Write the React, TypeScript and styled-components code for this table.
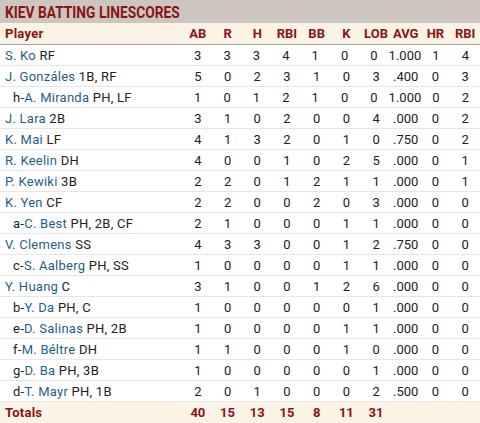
import styled, { createGlobalStyle } from "styled-components";

const GlobalStyle = createGlobalStyle`
  body {
    margin: 0;
    background: #fff;
    font-family: Roboto, "Liberation Sans", sans-serif;
  }
`;

const StyledBox = styled.section`
  width: 480px;
  font-family: Roboto, "Liberation Sans", sans-serif;
  font-size: 13px;
  color: #222;
`;

const TitleBar = styled.div`
  height: 23px;
  background: #cdc6c0;
  display: flex;
  align-items: center;
  padding-left: 5px;
  overflow: hidden;
`;

const Title = styled.h2`
  margin: 0;
  font-size: 17px;
  font-weight: 700;
  color: #8a1414;
  white-space: nowrap;
  transform: scaleX(0.81);
  transform-origin: left center;
`;

const Row = styled.div<{ $kind?: "head" | "total" }>`
  display: grid;
  grid-template-columns: 183px repeat(10, 1fr);
  align-items: center;
  height: ${(p) => (p.$kind === "total" ? "21px" : "20px")};
  background: ${(p) => (p.$kind ? "#fbf3e6" : "#fff")};
  border-bottom: ${(p) =>
    p.$kind === "total" ? "none" : p.$kind === "head" ? "1px solid #a9a39e" : "1px solid #e6e6e6"};
  color: ${(p) => (p.$kind ? "#8a1414" : "#222")};
  font-weight: ${(p) => (p.$kind ? 700 : 400)};
  ${(p) => p.$kind === "head" && "height: 21px;"}
`;

const PlayerCell = styled.div<{ $sub?: boolean }>`
  padding-left: ${(p) => (p.$sub ? "13px" : "5px")};
  white-space: nowrap;
  letter-spacing: 0.25px;
`;

const Name = styled.span`
  color: #1f5f86;
`;

const Stat = styled.div`
  text-align: center;
`;

type Batter = {
  sub?: string;
  name: string;
  pos: string;
  stats: string[];
};

const batters: Batter[] = [
  { name: "S. Ko", pos: "RF", stats: ["3", "3", "3", "4", "1", "0", "0", "1.000", "1", "4"] },
  { name: "J. Gonzáles", pos: "1B, RF", stats: ["5", "0", "2", "3", "1", "0", "3", ".400", "0", "3"] },
  { sub: "h", name: "A. Miranda", pos: "PH, LF", stats: ["1", "0", "1", "2", "1", "0", "0", "1.000", "0", "2"] },
  { name: "J. Lara", pos: "2B", stats: ["3", "1", "0", "2", "0", "0", "4", ".000", "0", "2"] },
  { name: "K. Mai", pos: "LF", stats: ["4", "1", "3", "2", "0", "1", "0", ".750", "0", "2"] },
  { name: "R. Keelin", pos: "DH", stats: ["4", "0", "0", "1", "0", "2", "5", ".000", "0", "1"] },
  { name: "P. Kewiki", pos: "3B", stats: ["2", "2", "0", "1", "2", "1", "1", ".000", "0", "1"] },
  { name: "K. Yen", pos: "CF", stats: ["2", "2", "0", "0", "2", "0", "3", ".000", "0", "0"] },
  { sub: "a", name: "C. Best", pos: "PH, 2B, CF", stats: ["2", "1", "0", "0", "0", "1", "1", ".000", "0", "0"] },
  { name: "V. Clemens", pos: "SS", stats: ["4", "3", "3", "0", "0", "1", "2", ".750", "0", "0"] },
  { sub: "c", name: "S. Aalberg", pos: "PH, SS", stats: ["1", "0", "0", "0", "0", "1", "1", ".000", "0", "0"] },
  { name: "Y. Huang", pos: "C", stats: ["3", "1", "0", "0", "1", "2", "6", ".000", "0", "0"] },
  { sub: "b", name: "Y. Da", pos: "PH, C", stats: ["1", "0", "0", "0", "0", "0", "1", ".000", "0", "0"] },
  { sub: "e", name: "D. Salinas", pos: "PH, 2B", stats: ["1", "0", "0", "0", "0", "1", "1", ".000", "0", "0"] },
  { sub: "f", name: "M. Béltre", pos: "DH", stats: ["1", "1", "0", "0", "0", "1", "0", ".000", "0", "0"] },
  { sub: "g", name: "D. Ba", pos: "PH, 3B", stats: ["1", "0", "0", "0", "0", "0", "1", ".000", "0", "0"] },
  { sub: "d", name: "T. Mayr", pos: "PH, 1B", stats: ["2", "0", "1", "0", "0", "0", "2", ".500", "0", "0"] },
];

const headers = ["AB", "R", "H", "RBI", "BB", "K", "LOB", "AVG", "HR", "RBI"];
const totals = ["40", "15", "13", "15", "8", "11", "31", "", "", ""];

export default function App() {
  return (
    <StyledBox>
      <GlobalStyle />
      <TitleBar>
        <Title>KIEV BATTING LINESCORES</Title>
      </TitleBar>
      <Row $kind="head">
        <PlayerCell>Player</PlayerCell>
        {headers.map((h, i) => (
          <Stat key={i}>{h}</Stat>
        ))}
      </Row>
      {batters.map((b) => (
        <Row key={b.name}>
          <PlayerCell $sub={!!b.sub}>
            {b.sub && `${b.sub}-`}
            <Name>{b.name}</Name> {b.pos}
          </PlayerCell>
          {b.stats.map((s, i) => (
            <Stat key={i}>{s}</Stat>
          ))}
        </Row>
      ))}
      <Row $kind="total">
        <PlayerCell>Totals</PlayerCell>
        {totals.map((t, i) => (
          <Stat key={i}>{t}</Stat>
        ))}
      </Row>
    </StyledBox>
  );
}
